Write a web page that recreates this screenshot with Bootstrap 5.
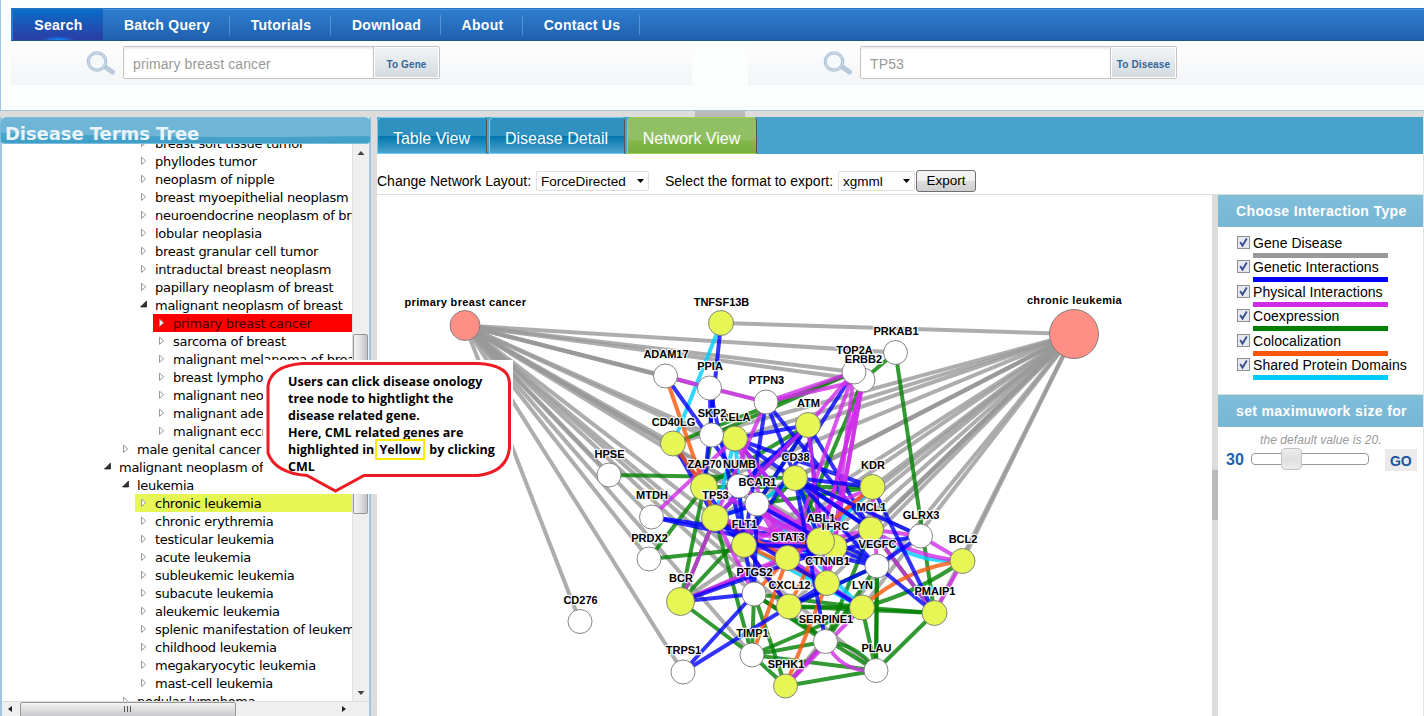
<!DOCTYPE html>
<html lang="en">
<head>
<meta charset="utf-8">
<title>Disease Network</title>
<link href="https://cdn.jsdelivr.net/npm/bootstrap@5.3.0/dist/css/bootstrap.min.css" rel="stylesheet">
<style>
body{font-family:"Liberation Sans",Arial,sans-serif;font-size:14px;line-height:18px;color:#000;background:#dcdcdc;height:716px;overflow:hidden}
.top-pane{height:111px;background:#fcfefe;border-left:1px solid #a3c5e1;border-bottom:1px solid #a3c5e1;padding:8px 0 0 10px}
.main-bar{height:33px;background:linear-gradient(#2f7fd0,#1f60ae);border-top:1px solid #2475c4;border-bottom:1px solid #1c5592;box-shadow:inset 0 1px #4391dc;padding:0}
.main-bar .nav-link{height:31px;padding:0 0 0 1px;line-height:33px;text-align:center;color:#fff;font-weight:700;font-size:14px;letter-spacing:.27px;position:relative}
.main-bar .nav-item+.nav-item .nav-link::after{content:"";position:absolute;right:0;top:6px;height:20px;width:1px;background:#5394d6}
.main-bar .active{background:radial-gradient(ellipse 18px 4px at 50% 100%,#0b8cff,transparent),linear-gradient(#0a6dc8,#2c3da5);border-left:2px solid #2b77cb}
.w1{width:92px}.w2{width:127px}.w3{width:101px}.w4{width:110px}.w5{width:82px}.w6{width:117px}
.query-strip{height:43px;margin-top:1px;background:linear-gradient(#fefefe,#f2f4f7);padding:4px 0 0 75px}
.qs-a{width:681px}
.glass{width:30px;height:26px;margin:5px 7px 0 0}
.query-box{width:317px;height:33px;border:1px solid #c4c4c4;border-radius:2px;background:#fff}
.query-box .form-control{border:0;border-radius:0;padding:3px 9px 0;height:31px;width:249px;flex:none;font-size:14px;letter-spacing:.12px;color:#999;box-shadow:inset 0 2px 2px #eee;background:none}
.query-box .btn{flex:1;border:0;border-left:1px solid #c4c4c4;border-radius:0;box-shadow:inset 0 0 0 1px #fff;background:linear-gradient(#f2f5f7,#d3d9df);padding:5px 0 0;font-size:10px;line-height:26px;font-weight:700;letter-spacing:.12px;color:#336699}
.h-split{height:6px}
.grip-h{width:50px;height:6px;background:#b9b9b9;margin-left:695px}
.tree-pane{width:371px;height:599px;background:#fff;border-left:2px solid #a3c5e1;border-right:2px solid #a3c5e1;position:relative}
.tree-title{height:27px;margin:0 -2px;border:1px solid #79bddb;border-radius:6px 6px 4px 4px;background:radial-gradient(ellipse 330px 12px at 250px 7px,#6fb6d6 96%,transparent),linear-gradient(#74bada 0 45%,#4da6cd 60%,#3f9ec7);color:#e8f4fa;font:bold 18px/31px "DejaVu Sans",Verdana,sans-serif;padding-left:4px;letter-spacing:-.08px}
.tree-view{width:350px;height:557px;overflow:hidden}
.tree-view ul{margin-top:-10px}
.tree-view li{height:18px;line-height:20px;white-space:nowrap;font-family:"DejaVu Sans",Verdana,sans-serif;font-size:13px;letter-spacing:-.27px;padding-left:20px;margin-left:133px;background:url("data:image/svg+xml,%3Csvg xmlns='http://www.w3.org/2000/svg' width='8' height='10'%3E%3Cpath d='M1.5 1.2v7.2L5.7 4.8z' fill='white' stroke='%23999'/%3E%3C/svg%3E") 5px 4px no-repeat}
.tree-view .d5{margin-left:151px}.tree-view .d3{margin-left:115px}.tree-view .d2{margin-left:97px}
.tree-view .open{background-image:url("data:image/svg+xml,%3Csvg xmlns='http://www.w3.org/2000/svg' width='8' height='10'%3E%3Cpath d='M6.5 1v6H.5z' fill='%23333' stroke='black' stroke-width='.6'/%3E%3C/svg%3E")}
.tree-view .hot{background-color:#f00;color:#400}
.tree-view .lime{background-color:#e5f655}
.sb-v{width:17px;background:#efefef;border-left:1px solid #e0e0e0}
.sb-h{height:15px;background:#efefef;border-top:1px solid #ddd}
.v-split{width:6px}
.tab-bar{height:37px;background:#47a3cb}
.tab-bar .nav-link{height:37px;padding:0 1px 0 0;line-height:41px;text-align:center;font-size:16px;color:#fff;border:1px solid #70cdf0;border-right:1px solid #555;border-radius:5px 4px 0 0;background:linear-gradient(#2f91c0 0 50%,#0276ad 52%,#4ba2cc)}
.tab-bar .nav-link.active{color:#fff;border-color:#9fd34f #555 #9fd34f #9fd34f;background:linear-gradient(#90c063 0 62%,#82b64b 66%,#75b03c)}
.tool-row{height:41px;border-bottom:1px solid #dcdcdc;padding-top:13px}
.tool-row span{padding-top:5px}
.tool-row .form-select{width:113px;height:20px;padding:1px 4px 0;border:1px solid #dfdfe6;border-radius:2px;font-size:13.5px;line-height:18px;color:#000;background:#fff url("data:image/svg+xml,%3Csvg xmlns='http://www.w3.org/2000/svg' width='7' height='4'%3E%3Cpath d='M0 0h7L3.5 4z'/%3E%3C/svg%3E") right 4px center/7px 4px no-repeat}
.tool-row .btn{height:22px;width:60px;padding:0;font-size:13.5px;line-height:20px;border:1px solid #707070;border-radius:3px;background:linear-gradient(#f2f2f2 50%,#dcdcdc 50%,#cfcfcf);color:#000}
.canvas-col{width:835px;overflow:hidden}
.grip-v{height:50px;background:#b9b9b9;margin-top:275px}
.right-col{border-right:1px solid #e4e4e4}
.side-head{height:32px;background:linear-gradient(#7fbedb,#76b7d5);color:#fff;font-weight:700;font-size:14px;line-height:32px;padding-left:18px;letter-spacing:.36px;white-space:nowrap}
.kinds{height:167px;padding:9px 0 0 19px}
.kind{height:24.4px}
.kind .form-check-input{margin:0 3px 0 0;width:13px;height:13px;min-height:0;border:1px solid #8e8f8f;border-radius:0;background:#e6e9f0 url("data:image/svg+xml,%3Csvg xmlns='http://www.w3.org/2000/svg' viewBox='0 0 11 11'%3E%3Cpath d='M2.2 5l2.3 3.6L8.8 1.6' fill='none' stroke='%233d5190' stroke-width='1.9'/%3E%3C/svg%3E") center/11px no-repeat;flex:none}
.kind label{display:block;line-height:15px;height:17px;white-space:nowrap;width:134.5px;letter-spacing:.06px}
.kind i{display:block;width:135px;height:5px}
.hint{color:#999;font-style:italic;font-size:12px;padding:4px 0 0 42px;line-height:18px;letter-spacing:.07px}
.track{width:118px;height:12px;border:1px solid #999;border-radius:4px;margin:4px 17px 0 7px;background:#fff}
.knob{width:21px;height:22px;border:1px solid #c4c4c4;border-radius:4px;background:linear-gradient(#eee,#dfdfdf 50%,#ebebeb);margin:-6px 0 0 29px}
.go-btn{width:32px;height:22px;background:#ebebeb;color:#1c56a0;font-weight:700;font-size:14px;padding:0;border:0;border-radius:0;line-height:24px;margin-left:-1px}
.note{left:263px;top:360px;width:250px;height:134px;z-index:5}
.note p{left:25px;top:13px;margin:0;white-space:nowrap;font:bold 12.5px/17px "Open Sans","Noto Sans",sans-serif}
.note mark{background:none;padding:0 2px;outline:2px solid #ffeb00;color:#000}
</style>
</head>
<body class="position-relative">
<header class="top-pane">
 <nav class="main-bar"><ul class="nav">
  <li class="nav-item w1"><a class="nav-link active" href="#">Search</a></li>
  <li class="nav-item w2"><a class="nav-link" href="#">Batch Query</a></li>
  <li class="nav-item w3"><a class="nav-link" href="#">Tutorials</a></li>
  <li class="nav-item w4"><a class="nav-link" href="#">Download</a></li>
  <li class="nav-item w5"><a class="nav-link" href="#">About</a></li>
  <li class="nav-item w6"><a class="nav-link" href="#">Contact Us</a></li>
 </ul></nav>
 <div class="d-flex justify-content-between">
  <form class="query-strip qs-a d-flex"><svg class="glass" viewBox="0 0 30 26"><path d="M18.500 15.500l8 5.500" stroke="#b9c9db" stroke-width="5" stroke-linecap="round"/><circle cx="11" cy="10.500" r="8.700" fill="#f6f9fb" stroke="#a9bed4" stroke-width="3.200"/><circle cx="11" cy="10.500" r="8.600" fill="none" stroke="#c9d8e6" stroke-width="1.600"/></svg>
   <div class="query-box d-flex"><input class="form-control" value="primary breast cancer"><button type="button" class="btn">To Gene</button></div></form>
  <form class="query-strip d-flex" id="gene-form"><svg class="glass" viewBox="0 0 30 26"><path d="M18.500 15.500l8 5.500" stroke="#b9c9db" stroke-width="5" stroke-linecap="round"/><circle cx="11" cy="10.500" r="8.700" fill="#f6f9fb" stroke="#a9bed4" stroke-width="3.200"/><circle cx="11" cy="10.500" r="8.600" fill="none" stroke="#c9d8e6" stroke-width="1.600"/></svg>
   <div class="query-box d-flex me-auto"><input class="form-control" value="TP53"><button type="button" class="btn">To Disease</button></div><span style="width:247px"></span></form>
 </div>
</header>
<div class="h-split"><div class="grip-h"></div></div>
<div class="d-flex">
 <aside class="tree-pane">
  <div class="tree-title">Disease Terms Tree</div>
  <div class="d-flex">
   <div class="tree-view"><ul class="list-unstyled">
    <li>breast soft tissue tumor</li><li>phyllodes tumor</li><li>neoplasm of nipple</li><li>breast myoepithelial neoplasm</li><li>neuroendocrine neoplasm of br</li><li>lobular neoplasia</li><li>breast granular cell tumor</li><li>intraductal breast neoplasm</li><li>papillary neoplasm of breast</li><li class="open">malignant neoplasm of breast</li>
    <li class="d5 hot">primary breast cancer</li><li class="d5">sarcoma of breast</li><li class="d5">malignant melanoma of breast</li><li class="d5">breast lympho</li><li class="d5">malignant neo</li><li class="d5">malignant ade</li><li class="d5">malignant eccrine</li>
    <li class="d3">male genital cancer</li><li class="d2 open">malignant neoplasm of</li><li class="d3 open">leukemia</li>
    <li class="lime">chronic leukemia</li><li>chronic erythremia</li><li>testicular leukemia</li><li>acute leukemia</li><li>subleukemic leukemia</li><li>subacute leukemia</li><li>aleukemic leukemia</li><li>splenic manifestation of leukem</li><li>childhood leukemia</li><li>megakaryocytic leukemia</li><li>mast-cell leukemia</li><li class="d3">nodular lymphoma</li>
   </ul></div>
   <svg class="sb-v" height="557" width="17"><defs><linearGradient id="tv"><stop offset="0" stop-color="#f5f5f5"/><stop offset=".5" stop-color="#e0e0e2"/><stop offset="1" stop-color="#c2c2c6"/></linearGradient></defs><path d="M4.500 11h7L8 7z M4.500 547h7L8 551z" fill="#444"/><rect x=".5" y="190.500" width="14" height="179" rx="1.500" fill="url(#tv)" stroke="#979797"/></svg>
  </div>
  <svg class="sb-h d-block" width="367" height="15"><defs><linearGradient id="th" x2="0" y2="1"><stop offset="0" stop-color="#f5f5f5"/><stop offset="1" stop-color="#c0c0c4"/></linearGradient></defs><path d="M10 4v6L6 7z M340 4v6l4-3z" fill="#222"/><rect x="18.500" y=".5" width="215" height="16" rx="1.500" fill="url(#th)" stroke="#979797"/><path d="M122.500 4v6m3-6v6m3-6v6" stroke="#555"/></svg>
 </aside>
 <div class="v-split"></div>
 <main class="bg-white flex-grow-1 right-col">
  <ul class="nav tab-bar"><li style="width:110px"><a class="nav-link" href="#">Table View</a></li><li style="width:136px;margin-left:2px"><a class="nav-link" href="#">Disease Detail</a></li><li style="width:130px;margin-left:2px"><a class="nav-link active" href="#">Network View</a></li></ul>
  <div class="tool-row d-flex"><span style="width:159px" class="text-nowrap">Change Network Layout:</span>
   <select class="form-select mt-1"><option>ForceDirected</option></select>
   <span style="width:189px;padding-left:16px" class="text-nowrap">Select the format to export:</span>
   <select class="form-select mt-1" style="width:77px"><option>xgmml</option></select><button class="btn" style="margin:3px 0 0 1px">Export</button></div>
  <div class="d-flex" style="height:522px">
   <div class="canvas-col"><svg id="net" width="835" height="522" viewBox="377 195 835 522"></svg></div>
   <div class="v-split" style="background:#dcdcdc"><div class="grip-v"></div></div>
   <section class="flex-grow-1">
    <div class="side-head">Choose Interaction Type</div>
    <div class="kinds">
     <div class="kind d-flex"><input class="form-check-input" type="checkbox" checked><div><label>Gene Disease</label><i style="background:#999"></i></div></div>
     <div class="kind d-flex"><input class="form-check-input" type="checkbox" checked><div><label>Genetic Interactions</label><i style="background:#00f"></i></div></div>
     <div class="kind d-flex"><input class="form-check-input" type="checkbox" checked><div><label>Physical Interactions</label><i style="background:#d02ce8"></i></div></div>
     <div class="kind d-flex"><input class="form-check-input" type="checkbox" checked><div><label>Coexpression</label><i style="background:#008000"></i></div></div>
     <div class="kind d-flex"><input class="form-check-input" type="checkbox" checked><div><label>Colocalization</label><i style="background:#f8570b"></i></div></div>
     <div class="kind d-flex"><input class="form-check-input" type="checkbox" checked><div><label>Shared Protein Domains</label><i style="background:#0cf"></i></div></div>
    </div>
    <div class="side-head" style="border-top:1px solid #dcdcdc;height:33px">set maximuwork size for</div>
    <div class="hint">the default value is 20.</div>
    <div class="d-flex" style="padding-left:8px"><b style="color:#1b5fb0;font-size:16px;line-height:22px">30</b><div class="track"><div class="knob"></div></div><button class="btn go-btn">GO</button></div>
   </section>
  </div>
 </main>
</div>
<div class="note position-absolute">
 <svg class="d-block" width="250" height="134"><path d="M0 0H250V134H0z" fill="#fff"/><path d="M39 3.500H215Q246 5 246.500 23V88Q244 112 215 115.500H101L72.500 131 44 115.500Q12 113 5 93V26Q8 6 39 3.500Z" fill="#fff" stroke="#ed1c24" stroke-width="3"/></svg>
 <p class="position-absolute">Users can click disease onology<br>tree node to hightlight the<br>disease related gene.<br>Here, CML related genes are<br>highlighted in <mark>Yellow</mark>&nbsp; by clicking<br>CML</p>
</div>
<script src="https://cdn.jsdelivr.net/npm/bootstrap@5.3.0/dist/js/bootstrap.bundle.min.js"></script>
<script>
// name: x, y, radius, fill, label y
const Y='#e5f655', W='#fff', R='#ff8f84';
const N={
 PBC:[465,325.5,15,R,302,'primary breast cancer'],CL:[1074,334,24.500,R,300,'chronic leukemia'],
 TNFSF13B:[721,323,12.500,Y,302],PRKAB1:[895.500,352.500,12,W,331],ERBB2:[863,380,12,W,359],TOP2A:[854,372,12,W,350],
 ADAM17:[665.500,376,12,W,354],PPIA:[709.500,388,12,W,366],PTPN3:[766,402,12,W,380],ATM:[808,425,12.500,Y,403],
 RELA:[735,438.500,12.500,Y,417],SKP2:[711.500,435,12,W,413],CD40LG:[673,443.500,12.500,Y,422],ZAP70:[704,487,13.500,Y,464],
 NUMB:[739,486,12,W,464],CD38:[795,478,12.500,Y,457],KDR:[872.500,487,12.500,Y,465],HPSE:[609,475,12,W,454],
 BCAR1:[757,504,12,W,482],TP53:[715,518,13.500,Y,495],MTDH:[651.500,517,12,W,495],MCL1:[871,529.500,12.500,Y,507],
 TFRC:[834,547,13,Y,526],ABL1:[820.500,541.500,14,Y,518],GLRX3:[920.500,536,12,W,515],FLT1:[744,545,12.500,Y,524],
 STAT3:[787.500,558,12.500,Y,537],BCL2:[962.500,561,12.500,Y,539],VEGFC:[877,566,12,W,544],PRDX2:[649,559,12,W,538],
 CTNNB1:[827,583,12.500,Y,561],PTGS2:[754,594,12,W,572],CXCL12:[789,606.500,12.500,Y,585],LYN:[862,607.500,12.500,Y,585],
 BCR:[680.500,601.500,14,Y,578],PMAIP1:[934.500,613,12.500,Y,591],CD276:[580,621.500,12,W,600],SERPINE1:[825.500,641.500,12,W,619],
 TIMP1:[752,655,12,W,633],PLAU:[876,670.500,12,W,648],TRPS1:[683,672,12,W,650],SPHK1:[785.500,686,12,Y,664]};
// edges by interaction type; a number after ":" bends the line
const E=[
 ['#999',`PBC-PRKAB1 PBC-ERBB2 PBC-TOP2A PBC-ADAM17 PBC-PPIA PBC-PTPN3 PBC-SKP2 PBC-NUMB PBC-HPSE PBC-BCAR1 PBC-MTDH PBC-GLRX3 PBC-VEGFC PBC-PRDX2 PBC-PTGS2 PBC-CD276 PBC-SERPINE1 PBC-TIMP1 PBC-PLAU PBC-TRPS1 PBC-TP53 PBC-CD40LG
 CL-TNFSF13B CL-ATM CL-RELA CL-CD40LG CL-ZAP70 CL-CD38 CL-CD38 CL-KDR CL-TP53 CL-MCL1 CL-MCL1 CL-TFRC CL-ABL1 CL-FLT1 CL-STAT3 CL-BCL2 CL-CTNNB1 CL-CXCL12 CL-LYN CL-BCR CL-PMAIP1 CL-SPHK1`],
 ['#008000',`CD40LG-TOP2A SKP2-TOP2A PRKAB1-ERBB2 PRKAB1-PMAIP1 HPSE-CD38 SKP2-ZAP70 ATM-TP53 ATM-ZAP70 ZAP70-PRDX2 PRDX2-ABL1 BCR-TP53 BCR-ZAP70 BCR-CD38 BCR-STAT3 BCR-TIMP1 TP53-TIMP1 PTGS2-TIMP1 PTGS2-SPHK1 PTGS2-PLAU PTGS2-LYN PTGS2-SERPINE1 TIMP1-LYN TIMP1-SERPINE1 TIMP1-PLAU TIMP1-SPHK1 SPHK1-PLAU PLAU-LYN PLAU-VEGFC PLAU-VEGFC PLAU-PMAIP1 PLAU-SERPINE1:7 LYN-PMAIP1 LYN-BCL2:5 CXCL12-LYN CXCL12-PMAIP1 CXCL12-VEGFC SERPINE1-VEGFC SERPINE1-SPHK1 MCL1-PMAIP1 CD38-TFRC BCAR1-CD38 BCAR1-KDR ERBB2-STAT3 KDR-ZAP70 SERPINE1-MCL1 ATM-BCAR1 ZAP70-TP53`],
 ['#0cf',`TNFSF13B-CD40LG RELA-TP53 RELA-FLT1 BCAR1-LYN BCAR1-ABL1 CTNNB1-LYN MCL1-BCL2:10 CD38-BCAR1 KDR-ABL1 TP53-BCAR1 FLT1-LYN ZAP70-TFRC STAT3-CTNNB1 CD38-ABL1`],
 ['#00f',`TNFSF13B-ZAP70 PPIA-FLT1 PPIA-SKP2 ADAM17-BCAR1 PTPN3-FLT1 PTPN3-ABL1 PTPN3-MCL1 TOP2A-FLT1 ATM-RELA ATM-TP53 ATM-BCAR1 ATM-NUMB ATM-CTNNB1 ATM-MCL1 RELA-KDR RELA-MCL1 RELA-ABL1 CD40LG-TP53 CD40LG-FLT1 MTDH-ABL1 MTDH-VEGFC`],
 ['#d02ce8',`ADAM17-PPIA PPIA-PTPN3 PTPN3-TOP2A PTPN3-TP53 PTPN3-ERBB2 TOP2A-ATM TOP2A-TFRC TOP2A-STAT3 ERBB2-ABL1 ERBB2-ABL1 ERBB2-TFRC ERBB2-CTNNB1 ATM-ABL1 ATM-TP53 MTDH-RELA RELA-ABL1 RELA-STAT3 ZAP70-ABL1 TP53-ABL1 TP53-ABL1:6 NUMB-ABL1 NUMB-TFRC BCAR1-ABL1 BCAR1-ABL1:6 BCAR1-CTNNB1 BCAR1-STAT3 TP53-STAT3 TP53-CTNNB1 TP53-BCR BCR-ABL1 BCR-STAT3 FLT1-ABL1 FLT1-ABL1:6 STAT3-KDR FLT1-KDR ABL1-MCL1 STAT3-LYN ABL1-CTNNB1 TFRC-CTNNB1 MCL1-PMAIP1 MCL1-GLRX3 GLRX3-BCL2 MCL1-BCL2:6 BCL2-PMAIP1 LYN-SPHK1 SERPINE1-SPHK1 SERPINE1-PLAU:10 TP53-PTGS2 KDR-VEGFC`],
 ['#f8570b',`ADAM17-TP53 CD40LG-ZAP70 TP53-STAT3 FLT1-CTNNB1 TIMP1-STAT3 SPHK1-CTNNB1 LYN-BCL2:-9 KDR-STAT3 TFRC-MCL1 PTGS2-STAT3 CXCL12-ABL1 FLT1-CXCL12`],
 ['#00f',`CD38-KDR CD38-MCL1 CD38-VEGFC CD38-GLRX3 CD38-SERPINE1 KDR-PMAIP1 VEGFC-PMAIP1 VEGFC-GLRX3 VEGFC-ABL1 VEGFC-ABL1:5 VEGFC-CXCL12 BCR-TFRC BCR-PTGS2 TRPS1-PTGS2 TRPS1-CXCL12 CXCL12-CTNNB1 BCAR1-PTGS2 BCAR1-TFRC FLT1-PTGS2 FLT1-CXCL12 TP53-LYN TP53-FLT1 FLT1-TFRC NUMB-FLT1 GLRX3-STAT3 MCL1-TFRC TP53-BCAR1`]];
let s='';
for(const [c,list] of E) for(const e of list.trim().split(/\s+/)){
 const [p,b]=e.split(':'),[a,z]=p.split('-').map(k=>N[k]);
 const dx=z[0]-a[0],dy=z[1]-a[1],l=Math.hypot(dx,dy),k=2*(+b||0)/l;
 s+=`<path d="M${a[0]} ${a[1]}Q${(a[0]+z[0])/2-dy*k} ${(a[1]+z[1])/2+dx*k} ${z[0]} ${z[1]}" fill="none" stroke="${c}" stroke-width="4" opacity=".8"/>`;}
for(const k in N){const n=N[k];s+=`<circle cx="${n[0]}" cy="${n[1]}" r="${n[2]}" fill="${n[3]}" stroke="#777" stroke-width=".9"/>`;}
for(const k in N){const n=N[k];s+=`<text x="${n[0]+.5}" y="${n[4]+4}" text-anchor="middle" font-size="11" font-weight="700" letter-spacing="${n[5]?.33:0}" paint-order="stroke" stroke="#fff" stroke-width="2.500" stroke-opacity=".85" stroke-linejoin="round">${n[5]||k}</text>`;}
document.getElementById('net').innerHTML=s;
</script>
</body>
</html>
